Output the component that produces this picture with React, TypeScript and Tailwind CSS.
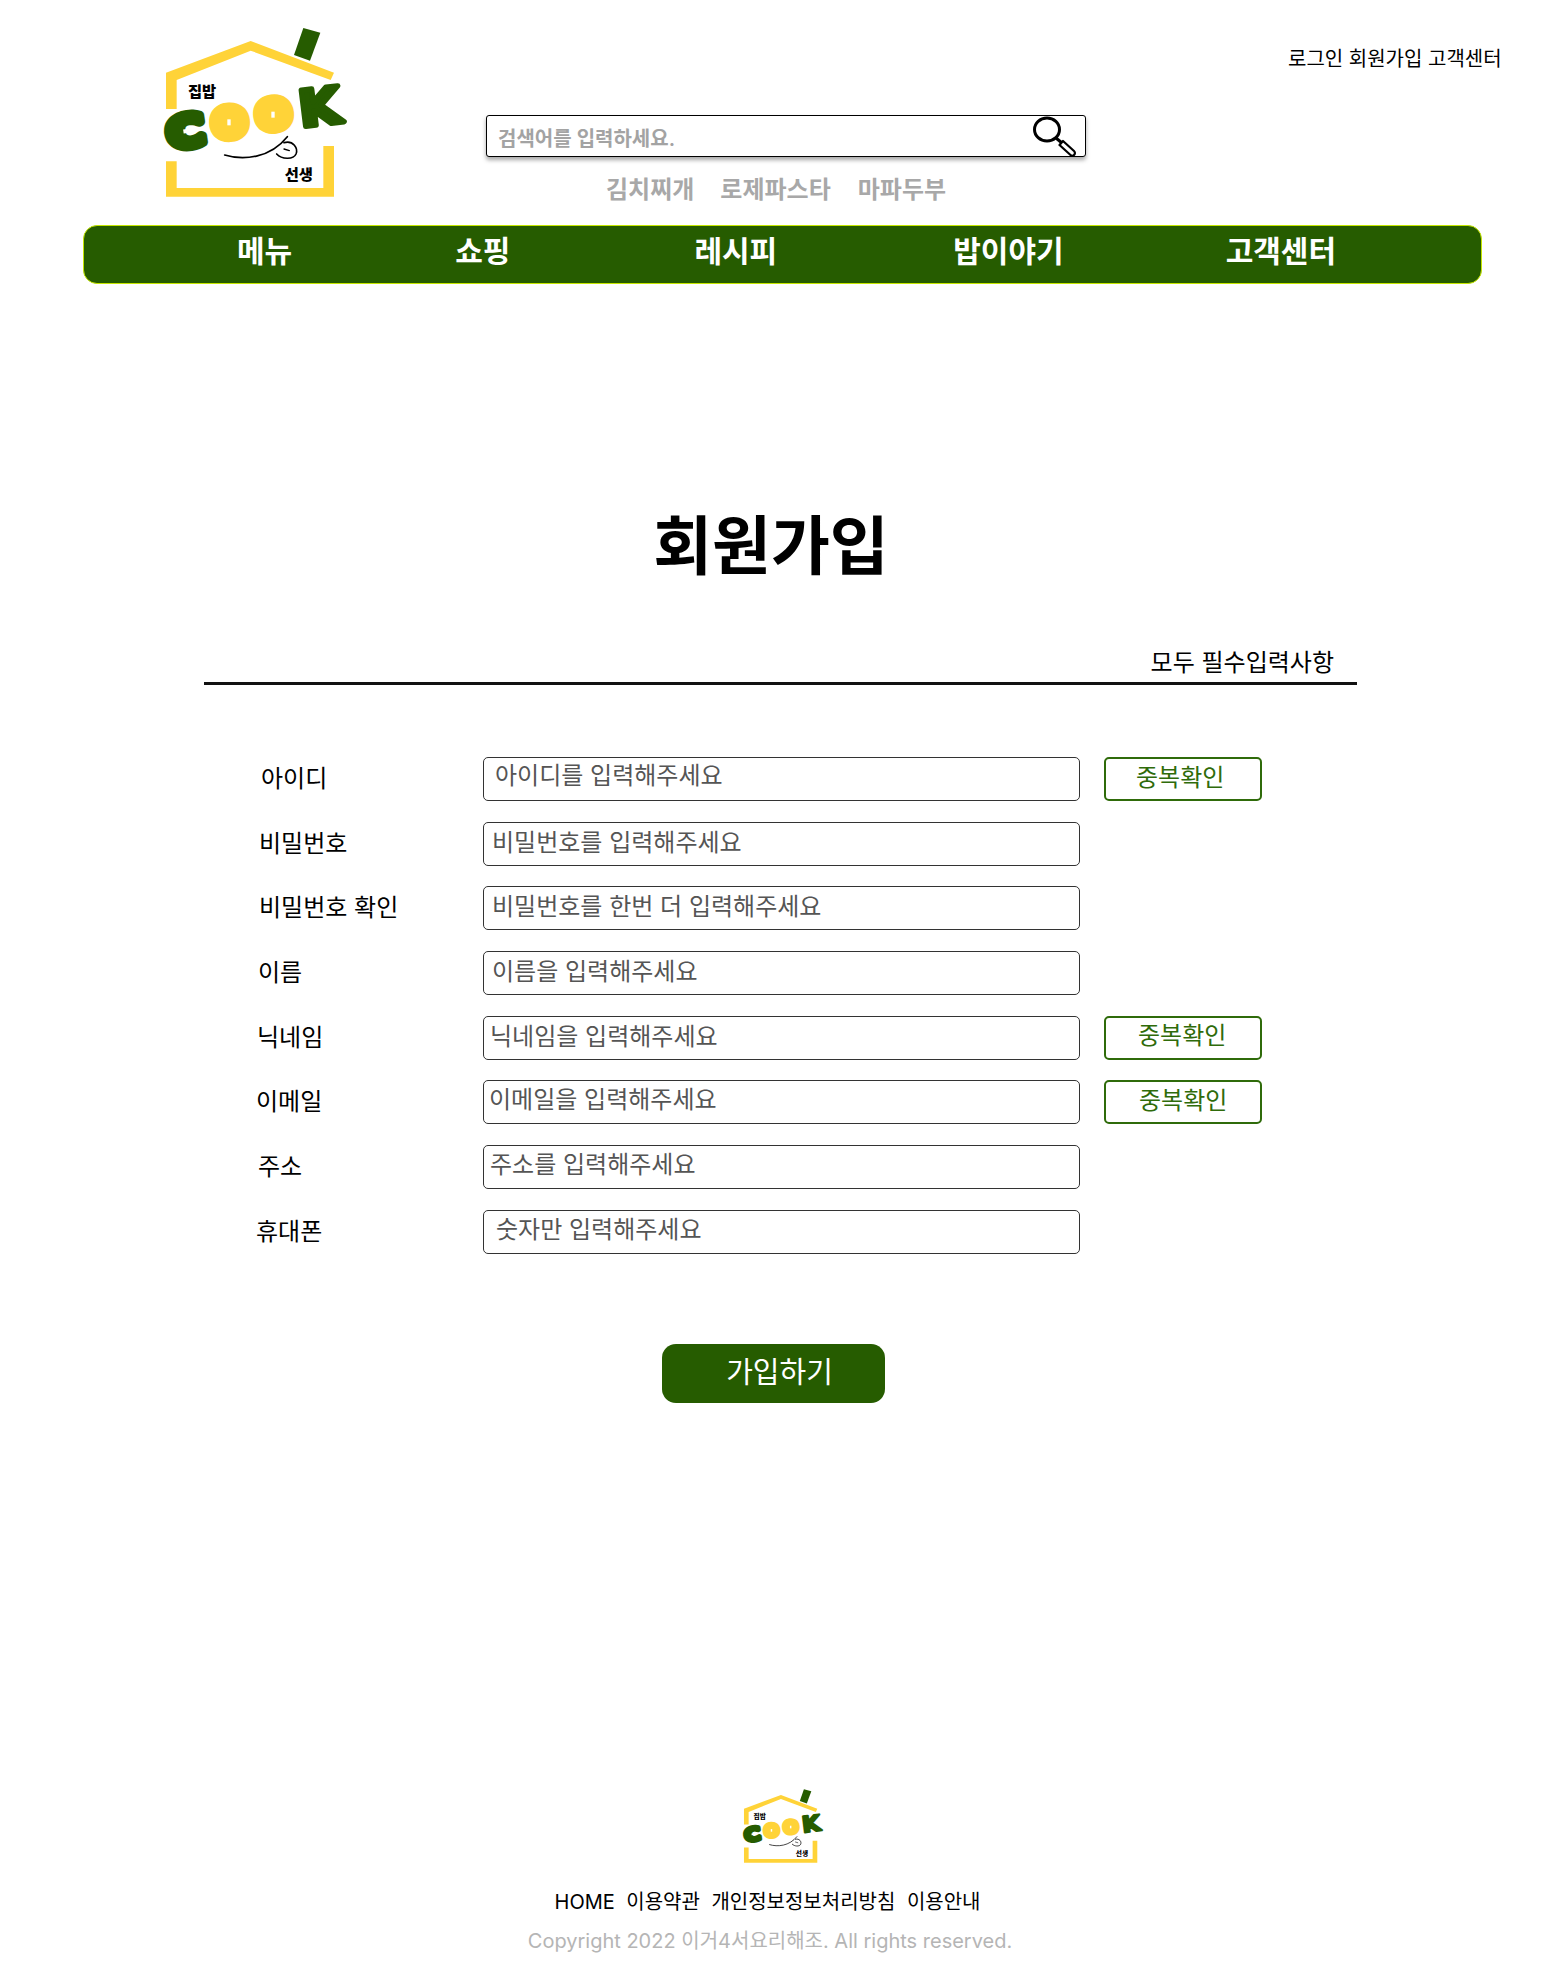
const font = "font-['Inter','Noto_Sans_CJK_KR',sans-serif]";

const navItems = [
  { name: "메뉴", className: "ml-[153px]" },
  { name: "쇼핑", className: "ml-[163px]" },
  { name: "레시피", className: "ml-[184px]" },
  { name: "밥이야기", className: "ml-[176px]" },
  { name: "고객센터", className: "ml-[162px]" },
];

const fields = [
  { label: "아이디", labelPad: "pl-[261px]", placeholder: "아이디를 입력해주세요", inputPad: "pl-[11px] pb-[7px]", check: "pl-[30px] pb-[2px]" },
  { label: "비밀번호", labelPad: "pl-[259px]", placeholder: "비밀번호를 입력해주세요", inputPad: "pl-[8px] pb-[3px]" },
  { label: "비밀번호 확인", labelPad: "pl-[259px]", placeholder: "비밀번호를 한번 더 입력해주세요", inputPad: "pl-[8px] pb-[3px]" },
  { label: "이름", labelPad: "pl-[258px]", placeholder: "이름을 입력해주세요", inputPad: "pl-[8px] pb-[3px]" },
  { label: "닉네임", labelPad: "pl-[257px]", placeholder: "닉네임을 입력해주세요", inputPad: "pl-[6px] pb-[3px]", check: "pl-[32px] pb-[3px]" },
  { label: "이메일", labelPad: "pl-[256px]", placeholder: "이메일을 입력해주세요", inputPad: "pl-[5px] pb-[5px]", check: "pl-[33px] pb-[2px]" },
  { label: "주소", labelPad: "pl-[258px]", placeholder: "주소를 입력해주세요", inputPad: "pl-[6px] pb-[5px]" },
  { label: "휴대폰", labelPad: "pl-[256px]", placeholder: "숫자만 입력해주세요", inputPad: "pl-[12px] pb-[5px]" },
];

function Logo({ className }: { className: string }) {
  const green = "#265c00";
  const yellow = "#ffd338";
  return (
    <svg viewBox="0 0 780 660" className={className}>
      <polygon fill={yellow} points="108,218 362,123 612,218 602,240 362,152 140,240 140,327 108,327" />
      <polygon fill={yellow} points="108,484 140,484 140,564 580,564 580,438 612,438 612,590 108,590" />
      <polygon fill={green} points="520,84 571,98 540,182 492,165" />
      <g fontFamily="'DejaVu Sans', sans-serif" fontWeight="700" strokeLinejoin="round">
        <text x="112" y="438" fontSize="125" fill={green} stroke={green} strokeWidth="30" textLength="108" lengthAdjust="spacingAndGlyphs" transform="rotate(-8 167 390)">C</text>
        <text x="253" y="405" fontSize="104" fill={yellow} stroke={yellow} strokeWidth="40" textLength="92" lengthAdjust="spacingAndGlyphs" transform="rotate(-3 300 367)">O</text>
        <text x="385" y="380" fontSize="104" fill={yellow} stroke={yellow} strokeWidth="40" textLength="92" lengthAdjust="spacingAndGlyphs" transform="rotate(-8 432 342)">O</text>
        <text x="506" y="374" fontSize="150" fill={green} stroke={green} strokeWidth="16" textLength="125" lengthAdjust="spacingAndGlyphs" transform="rotate(-7 570 320)">K</text>
      </g>
      <rect x="292" y="358" width="10" height="18" fill="#fff" />
      <rect x="424" y="335" width="10" height="18" fill="#fff" />
      <rect x="160" y="386" width="38" height="12" fill="#fff" transform="rotate(-8 180 392)" />
      <path d="M284 465 C340 482 420 475 472 410" fill="none" stroke="#000" strokeWidth="5" strokeLinecap="round" />
      <path d="M462 428 C490 420 505 445 498 462 C490 480 455 478 440 462" fill="none" stroke="#000" strokeWidth="5" strokeLinecap="round" />
      <path d="M462 447 L478 452" fill="none" stroke="#000" strokeWidth="4" strokeLinecap="round" />
      <text x="174" y="290" fontSize="46" fontWeight="900" fill="#000" fontFamily="'Noto Sans CJK KR', sans-serif">집밥</text>
      <text x="464" y="540" fontSize="46" fontWeight="900" fill="#000" fontFamily="'Noto Sans CJK KR', sans-serif">선생</text>
    </svg>
  );
}

function SearchIcon() {
  return (
    <svg viewBox="0 0 43 40" className="absolute right-[9px] top-0 h-[40px] w-[43px]">
      <ellipse cx="14" cy="13.5" rx="12.5" ry="11.5" fill="#fff" stroke="#000" strokeWidth="3" />
      <path d="M23 22 L29 27" stroke="#000" strokeWidth="3" />
      <path d="M30 25 L41 35 A2.6 2.6 0 0 1 37.5 39 L26.5 29 Z" fill="#fff" stroke="#000" strokeWidth="2.2" strokeLinejoin="round" />
    </svg>
  );
}

export default function App() {
  return (
    <div className={`${font} h-[1977px] w-[1564px] overflow-hidden bg-white text-black`}>
      {/* Header */}
      <header className="flex h-[225px]">
        <Logo className="ml-[130px] h-[220px] w-[260px] shrink-0" />
        <div className="ml-[96px] w-[600px] pt-[115px]">
          <div className="relative h-[42px] rounded-[3px] border border-black bg-white pl-[11px] shadow-[0_3px_4px_rgba(0,0,0,0.35)]">
            <input
              placeholder="검색어를 입력하세요."
              className="h-[40px] w-[520px] bg-transparent pt-[6px] text-[20px] font-semibold outline-none placeholder:text-[#a3a3a3]"
            />
            <SearchIcon />
          </div>
          <div className="mt-[15px] flex pl-[120px] text-[24px] font-semibold leading-[36px] text-[#a8a8a8]">
            <span>김치찌개</span>
            <span className="ml-[26px]">로제파스타</span>
            <span className="ml-[27px]">마파두부</span>
          </div>
        </div>
        <div className="ml-[202px] whitespace-nowrap pt-[45px] text-[20px] leading-[28px]">로그인 회원가입 고객센터</div>
      </header>

      {/* Nav */}
      <nav className="ml-[83px] flex h-[59px] w-[1399px] items-center rounded-[14px] border border-[#c5e600] bg-[#265c00] pb-[6px] text-[30px] font-bold text-white">
        {navItems.map((item) => (
          <span key={item.name} className={item.className}>
            {item.name}
          </span>
        ))}
      </nav>

      {/* Title */}
      <h1 className="mt-[219px] pr-[22px] text-center text-[64px] font-bold leading-[86px]">회원가입</h1>

      <div className="ml-[204px] mt-[57px] w-[1153px] border-b-[3px] border-[#111] pb-[2px] pr-[23px] text-right text-[24px] leading-[34px]">
        모두 필수입력사항
      </div>

      {/* Form */}
      <form className="mt-[72px] flex flex-col gap-[20.7px]">
        {fields.map((field) => (
          <div key={field.label} className="flex h-[44px] items-center">
            <label className={`${field.labelPad} w-[483px] shrink-0 text-[24px]`}>{field.label}</label>
            <input
              placeholder={field.placeholder}
              className={`${field.inputPad} h-[44px] w-[597px] shrink-0 rounded-[5px] border border-[#333] bg-white text-[24px] outline-none placeholder:text-[#555]`}
            />
            {field.check && (
              <button
                type="button"
                className={`${field.check} ml-[24px] h-[44px] w-[158px] rounded-[5px] border-2 border-[#2f6b0a] text-left text-[24px] text-[#2f6b0a]`}
              >
                중복확인
              </button>
            )}
          </div>
        ))}
        <button
          type="button"
          className="ml-[662px] mt-[69px] h-[59px] w-[223px] rounded-[14px] bg-[#265c00] pl-[12px] text-[29px] text-white"
        >
          가입하기
        </button>
      </form>

      {/* Footer */}
      <footer className="mt-[374px] flex flex-col items-center">
        <Logo className="ml-[5px] h-[96px] w-[114px]" />
        <div className="mt-[14px] flex gap-[11.5px] pr-[29px] text-[20px] leading-[30px]">
          <span>HOME</span>
          <span>이용약관</span>
          <span>개인정보정보처리방침</span>
          <span>이용안내</span>
        </div>
        <p className="mt-[9px] pr-[24px] text-[20px] leading-[30px] text-[#b5b5b5]">Copyright 2022 이거4서요리해조. All rights reserved.</p>
      </footer>
    </div>
  );
}
